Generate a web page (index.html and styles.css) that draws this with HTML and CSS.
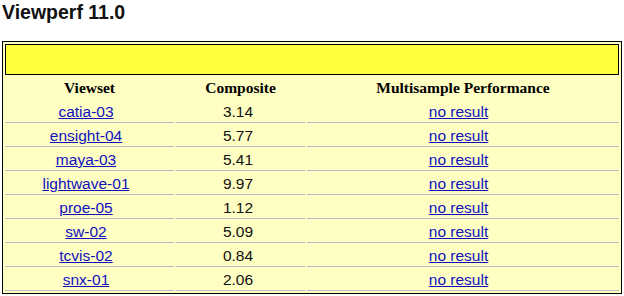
FILE: index.html
```html
<!DOCTYPE html>
<html>
<head>
<meta charset="utf-8">
<link rel="stylesheet" href="styles.css">
</head>
<body>
<h1 class="title">Viewperf 11.0</h1>
<table class="results">
  <colgroup>
    <col class="c1"><col class="c2"><col class="c3">
  </colgroup>
  <tr><td class="banner" colspan="3"></td></tr>
  <tr class="head"><th>Viewset</th><th>Composite</th><th>Multisample Performance</th></tr>
  <tr><td class="name"><a href="#">catia-03</a></td><td class="score">3.14</td><td class="multi"><a href="#">no result</a></td></tr>
  <tr><td class="name"><a href="#">ensight-04</a></td><td class="score">5.77</td><td class="multi"><a href="#">no result</a></td></tr>
  <tr><td class="name"><a href="#">maya-03</a></td><td class="score">5.41</td><td class="multi"><a href="#">no result</a></td></tr>
  <tr><td class="name"><a href="#">lightwave-01</a></td><td class="score">9.97</td><td class="multi"><a href="#">no result</a></td></tr>
  <tr><td class="name"><a href="#">proe-05</a></td><td class="score">1.12</td><td class="multi"><a href="#">no result</a></td></tr>
  <tr><td class="name"><a href="#">sw-02</a></td><td class="score">5.09</td><td class="multi"><a href="#">no result</a></td></tr>
  <tr><td class="name"><a href="#">tcvis-02</a></td><td class="score">0.84</td><td class="multi"><a href="#">no result</a></td></tr>
  <tr><td class="name"><a href="#">snx-01</a></td><td class="score">2.06</td><td class="multi"><a href="#">no result</a></td></tr>
</table>
</body>
</html>
```
FILE: styles.css
```css
html, body {
  background: #ffffff;
}
body {
  margin: 0 2px;
  font-family: "Liberation Sans", Arial, sans-serif;
  color: #000;
}
.title {
  margin: 1px 0 0 0;
  font-size: 19.5px;
  line-height: 22px;
  font-weight: bold;
  font-family: "Liberation Sans", Arial, sans-serif;
  color: #111;
}
.results {
  margin-top: 18px;
  width: 620px;
  table-layout: fixed;
  border-collapse: separate;
  border-spacing: 2px;
  border: 1px solid #000;
  background: #ffffc4;
}
.c1 { width: 169px; }
.c2 { width: 129px; }
.c3 { width: 312px; }
.head th {
  height: 22px;
  padding: 0;
  font-family: "Liberation Serif", "Times New Roman", serif;
  font-weight: bold;
  font-size: 15.5px;
  text-align: center;
  color: #000;
}
.results td {
  height: 21px;
  padding: 0;
  text-align: center;
  font-size: 15.5px;
  border-bottom: 1px solid #b8b8c8;
  color: #111;
}
.results td.name { padding-right: 7px; }
.results td.score { padding-right: 5px; }
.results td.multi { padding-right: 9px; }
.results td.banner {
  height: 29px;
  padding: 0;
  border: 1px solid #000;
  background: #ffff3c;
}
.results a {
  color: #1010c0;
  text-decoration: underline;
}
```
